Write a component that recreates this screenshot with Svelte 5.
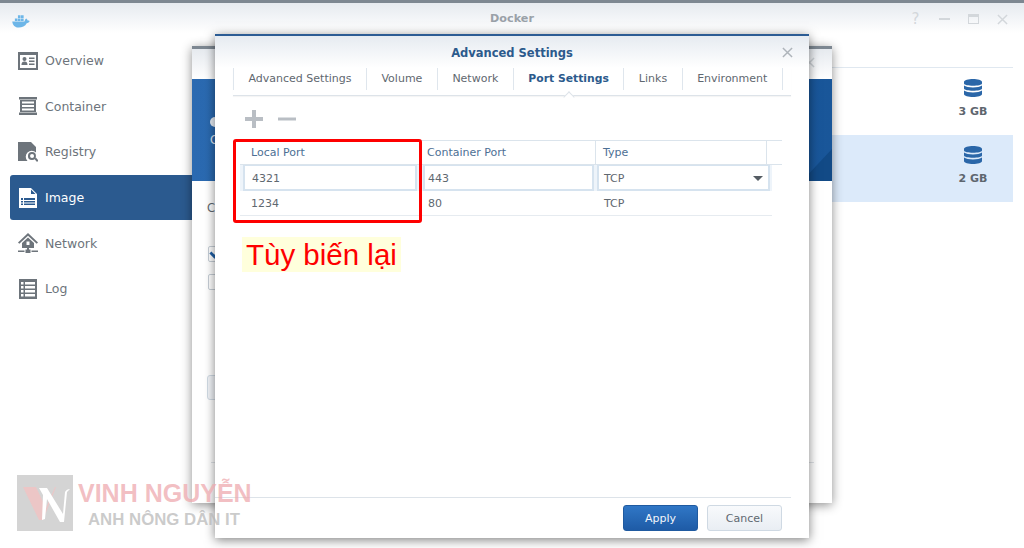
<script>
    const nav = [
        { label: 'Overview', icon: 'overview' },
        { label: 'Container', icon: 'container' },
        { label: 'Registry', icon: 'registry' },
        { label: 'Image', icon: 'image', active: true },
        { label: 'Network', icon: 'network' },
        { label: 'Log', icon: 'log' }
    ];
    const tabs = ['Advanced Settings', 'Volume', 'Network', 'Port Settings', 'Links', 'Environment'];
    const sizes = ['3 GB', '2 GB'];
</script>

{#snippet navIcon(name)}
    <svg class="nav-icon" viewBox="0 0 20 20" fill="currentColor">
        {#if name === 'overview'}
            <path fill-rule="evenodd" d="M0 1h20v18H0zM2 4v13h16V4z" />
            <circle cx="6.5" cy="8" r="2" />
            <path d="M3.5 14c0-3 1.500-3.500 3-3.500s3 .5 3 3.500zM11 6.500h5.500v1.500H11zM11 9.500h5.500V11H11zM11 12.500h5.500V14H11z" />
        {:else if name === 'container'}
            <path fill-rule="evenodd" d="M1 1h18v2.500H1zM1 16.500h18V19H1zM2 4h16v12H2zM4 5.500v2h12v-2zM4 9v2h12V9zM4 12.500v2h12v-2z" />
        {:else if name === 'registry'}
            <path d="M0 0h13l5 5v5.500a6 6 0 0 0-8.500 8.500H0z" />
            <path fill-rule="evenodd" d="M14 10a4 4 0 1 1-.1 8 4 4 0 0 1 .1-8zm0 2a2 2 0 1 0 .1 4 2 2 0 0 0-.1-4z" />
            <path d="M16.500 17l1.400-1.400 2.500 2.900-1.400 1.400z" />
        {:else if name === 'image'}
            <path fill-rule="evenodd" d="M1 0h12l6 6v14H1zM13 1.500V6h4.500zM3 10v2h2v-2zM6 10v2h11v-2zM3 13v1.500h2V13zM6 13v1.500h11V13zM3 15.500V17h2v-1.500zM6 15.500V17h11v-1.500z" />
        {:else if name === 'network'}
            <path fill-rule="evenodd" d="M10 0l10 9.500-1.300 1.300L10 2.800 1.300 10.800 0 9.500zM10 4.500l6 5.500v5H4v-5zM8.500 8.500v3.500h3V8.500z" />
            <path d="M9 15h2v2.500h-2zM0 17.500h6.500V19H0zM13.500 17.500H20V19h-6.500zM7.500 16.500h5V20h-5z" />
        {:else}
            <path fill-rule="evenodd" d="M1 0h18v20H1zM3 3v2.500h2.500V3zM7 3v2.500h10V3zM3 7v2.500h2.500V7zM7 7v2.500h10V7zM3 11v2.500h2.500V11zM7 11v2.500h10V11zM3 15v2.500h2.500V15zM7 15v2.500h10V15z" />
        {/if}
    </svg>
{/snippet}

{#snippet closeIcon(cls)}
    <svg class={cls} viewBox="0 0 12 12" fill="none" stroke="currentColor" stroke-width="1.600">
        <path d="M1 1l10 10M11 1L1 11" />
    </svg>
{/snippet}

<div class="desktop">
    <!-- ventana principal de Docker -->
    <section class="window main">
        <header class="main-title">
            <svg class="whale" viewBox="0 0 20 16">
                <path fill="#6db6e8" d="M0 8.500h14c.500-2 1-3 2-3.500 1 .5 1.500 1.500 1.500 2.500.8 0 1.800 0 2.500.5-1 2-2.500 2.500-3.500 2.500C15 14 11 15.500 7.500 15.500 3 15.500.5 12.500 0 8.500z" />
                <path fill="#6db6e8" d="M3 5h3v3H3zM6.500 5h3v3h-3zM10 5h3v3h-3zM6.500 1.500h3v3h-3zM10 1.500h3v3h-3z" />
            </svg>
            <span>Docker</span>
            <div class="win-controls">
                <span class="help">?</span>
                <i class="dash"></i>
                <i class="square"></i>
                {@render closeIcon('win-close')}
            </div>
        </header>
        <div class="main-body">
            <nav class="sidebar">
                {#each nav as item}
                    <div class="nav-item" class:active={item.active}>
                        {@render navIcon(item.icon)}
                        <span>{item.label}</span>
                    </div>
                {/each}
            </nav>
            <div class="image-list">
                {#each sizes as size, i}
                    <div class="image-row" class:selected={i === 1}>
                        <div class="size">
                            <svg class="disk" viewBox="0 0 18 18" fill="#2a66a8">
                                <path d="M0 3c0-4 18-4 18 0v1.500c0 3-18 3-18 0zM0 6.500c3 2.500 15 2.500 18 0V9.500c0 3-18 3-18 0zM0 11.500c3 2.500 15 2.500 18 0V15c0 4-18 4-18 0z" />
                            </svg>
                            <span>{size}</span>
                        </div>
                    </div>
                {/each}
            </div>
        </div>
    </section>

    <!-- asistente de atrás -->
    <section class="window wizard">
        <header class="wizard-title">
            {@render closeIcon('wizard-close')}
        </header>
        <div class="banner">
            <i class="banner-dot"></i>
            <span class="banner-text">C</span>
            <svg class="banner-mark" viewBox="0 0 30 102" preserveAspectRatio="none">
                <path fill="#124a86" d="M0 102l30-32v32z" />
            </svg>
        </div>
        <div class="wizard-body">
            <span class="wizard-label">C</span>
            <div class="checks">
                <span class="check on">
                    <svg viewBox="0 0 10 10" fill="none" stroke="#1f5fa5" stroke-width="2"><path d="M1 4l3 3 5-5" /></svg>
                </span>
                <span class="check"></span>
            </div>
            <span class="wizard-btn"></span>
            <i class="wizard-rule"></i>
        </div>
    </section>

    <!-- diálogo Advanced Settings -->
    <section class="window dialog">
        <header class="dialog-title">
            <span>Advanced Settings</span>
            {@render closeIcon('dialog-close')}
        </header>
        <div class="tabs">
            {#each tabs as tab}
                <div class="tab" class:current={tab === 'Port Settings'}>{tab}</div>
            {/each}
        </div>
        <div class="toolbar">
            <svg viewBox="0 0 20 20" fill="#b9bec4"><path d="M8 1h4v7h7v4h-7v7H8v-7H1V8h7z" /></svg>
            <svg viewBox="0 0 20 20" fill="#b9bec4"><path d="M1 8.500h18v3H1z" /></svg>
        </div>
        <div class="port-table">
            <div class="head">
                <div>Local Port</div>
                <div>Container Port</div>
                <div>Type</div>
                <div></div>
            </div>
            <div class="row editing">
                <div class="field">4321</div>
                <div class="field">443</div>
                <div class="field select">TCP<i class="caret"></i></div>
            </div>
            <div class="row plain">
                <div>1234</div>
                <div>80</div>
                <div>TCP</div>
            </div>
            <div class="red-box"></div>
        </div>
        <div class="note"><span>Tùy biến lại</span></div>
        <footer class="dialog-foot">
            <button class="btn primary">Apply</button>
            <button class="btn">Cancel</button>
        </footer>
    </section>

    <!-- marca de agua -->
    <div class="watermark">
        <svg class="wm-logo" viewBox="0 0 56 56">
            <rect width="56" height="56" fill="#d4d4d4" />
            <path fill="#ecc6c6" d="M6 12h13l10 21 9-21h1L26 45h-4z" />
            <path fill="#fff" d="M22 13h8l16 26 2-22c1-2 3-3 5-3l-3 3-3 30h-4L30 24l-2 20-3 1 1-25z" />
        </svg>
        <div class="wm-text">
            <strong>VINH NGUYỄN</strong>
            <span>ANH NÔNG DÂN IT</span>
        </div>
    </div>
</div>

<style>
    :global(body) {
        margin: 0;
    }

    .desktop {
        position: relative;
        width: 1024px;
        height: 548px;
        overflow: hidden;
        background: #fff;
        font-family: "DejaVu Sans", Verdana, sans-serif;
        font-size: 11.5px;
        color: #5f6870;
    }

    .window {
        position: absolute;
        display: flex;
        flex-direction: column;
        box-sizing: border-box;
        background: #fff;
    }

    /* Ventana principal */
    .main {
        inset: 0;
        border-top: 3px solid #7d8791;
    }

    .main-title {
        display: flex;
        align-items: center;
        justify-content: center;
        position: relative;
        height: 30px;
        flex: none;
        background: linear-gradient(#e6eaef, #fff);
        color: #9aa1a8;
        font-weight: bold;
        font-size: 11.200px;
    }

    .whale {
        position: absolute;
        left: 12px;
        top: 11px;
        width: 18px;
        height: 14px;
    }

    .win-controls {
        position: absolute;
        top: 8px;
        right: 16px;
        display: flex;
        align-items: center;
        gap: 18px;
        height: 16px;
        color: #d3d7db;
    }

    .help {
        width: 11px;
        text-align: center;
        font-size: 15px;
        font-weight: normal;
    }

    .dash {
        width: 11px;
        height: 2px;
        background: currentColor;
    }

    .square {
        box-sizing: border-box;
        width: 11px;
        height: 10px;
        border: 1px solid currentColor;
        border-top-width: 3px;
    }

    :global(.win-close) {
        width: 11px;
        height: 11px;
    }

    .main-body {
        display: flex;
        flex: 1;
    }

    .sidebar {
        box-sizing: border-box;
        width: 192px;
        flex: none;
        padding: 5px 0 0 10px;
        display: flex;
        flex-direction: column;
    }

    .nav-item {
        display: flex;
        align-items: center;
        gap: 7px;
        height: 45.600px;
        box-sizing: border-box;
        padding-left: 8px;
        font-size: 12.500px;
        color: #6d747b;
    }

    .nav-item.active {
        background: #2b5a8f;
        color: #fff;
        border-radius: 3px 0 0 3px;
    }

    .nav-icon {
        width: 20px;
        height: 20px;
        flex: none;
    }

    .image-list {
        flex: 1;
        margin: 34px 11px 0 0;
        border-top: 1px solid #e0e8f0;
    }

    .image-row {
        display: flex;
        justify-content: flex-end;
        height: 67px;
    }

    .image-row.selected {
        background: #dceafa;
    }

    .size {
        width: 80px;
        padding-top: 11px;
        display: flex;
        flex-direction: column;
        align-items: center;
        gap: 8px;
        font-weight: bold;
        font-size: 11px;
        color: #5e666e;
    }

    .disk {
        width: 18px;
        height: 18px;
    }

    /* Ventana del asistente */
    .wizard {
        left: 192px;
        top: 46px;
        width: 640px;
        height: 457px;
        border-top: 3px solid #7d8791;
        box-shadow: 0 2px 10px rgba(0, 0, 0, 0.45);
    }

    .wizard-title {
        position: relative;
        height: 30px;
        flex: none;
        background: linear-gradient(#e6eaef, #fff);
        color: #ccd1d6;
    }

    :global(.wizard-close) {
        position: absolute;
        right: 17px;
        top: 8px;
        width: 11px;
        height: 11px;
    }

    .banner {
        position: relative;
        height: 102px;
        flex: none;
        background: linear-gradient(90deg, #2b6ab1, #1a5ba1 70%, #195699);
        color: #dfe9f4;
    }

    .banner-dot {
        position: absolute;
        left: 18px;
        top: 38px;
        width: 10px;
        height: 10px;
        border-radius: 50%;
        background: #e6edf5;
    }

    .banner-text {
        position: absolute;
        left: 18px;
        top: 54px;
    }

    .banner-mark {
        position: absolute;
        right: 0;
        top: 0;
        width: 30px;
        height: 102px;
    }

    .wizard-body {
        position: relative;
        flex: 1;
    }

    .wizard-label {
        position: absolute;
        left: 15px;
        top: 20px;
    }

    .checks {
        position: absolute;
        left: 16px;
        top: 65px;
        display: flex;
        flex-direction: column;
        gap: 12px;
    }

    .check {
        box-sizing: border-box;
        display: block;
        width: 16px;
        height: 16px;
        border: 1px solid #c6ced6;
        border-radius: 2px;
    }

    .check svg {
        display: block;
        width: 14px;
        height: 14px;
    }

    .wizard-btn {
        position: absolute;
        left: 15px;
        top: 194px;
        width: 40px;
        height: 25px;
        box-sizing: border-box;
        border: 1px solid #d0dae4;
        border-radius: 3px;
        background: #f1f4f8;
    }

    .wizard-rule {
        position: absolute;
        left: 19px;
        right: 18px;
        top: 281px;
        height: 1px;
        background: #dfe3e7;
    }

    /* Diálogo */
    .dialog {
        left: 215px;
        top: 34px;
        width: 594px;
        height: 504px;
        border-top: 2px solid #2c5c94;
        box-shadow: 0 2px 10px rgba(0, 0, 0, 0.5);
    }

    .dialog-title {
        position: relative;
        display: flex;
        align-items: center;
        justify-content: center;
        height: 32px;
        padding-top: 1px;
        box-sizing: border-box;
        flex: none;
        background: linear-gradient(#e6ebf1, #fff);
        color: #2c5a8c;
        font-weight: bold;
        font-size: 11.500px;
    }

    :global(.dialog-close) {
        position: absolute;
        right: 16px;
        top: 11px;
        width: 11px;
        height: 11px;
        color: #aeb4ba;
    }

    .tabs {
        position: relative;
        display: flex;
        flex: none;
        margin: 0 18px;
        height: 27px;
        border-bottom: 1px solid #dde3e9;
        box-shadow: 0 1px 1px rgba(0, 0, 0, 0.04);
        align-items: flex-start;
    }

    .tab {
        position: relative;
        height: 22px;
        line-height: 22px;
        padding: 0 14.500px;
        border-right: 1px solid #dfe6ed;
        white-space: nowrap;
        font-size: 11px;
    }

    .tab:first-child {
        border-left: 1px solid #dfe6ed;
    }

    .tab.current {
        color: #2c5a8c;
        font-weight: bold;
        font-size: 10.800px;
    }

    .tab.current::after {
        content: "";
        position: absolute;
        left: 50%;
        bottom: -11px;
        width: 7px;
        height: 7px;
        margin-left: -4px;
        background: #fff;
        border: 1px solid #dde3e9;
        border-width: 1px 0 0 1px;
        transform: rotate(45deg);
    }

    .toolbar {
        display: flex;
        gap: 13px;
        flex: none;
        padding: 13px 0 0 29px;
        height: 31px;
    }

    .toolbar svg {
        width: 20px;
        height: 20px;
    }

    .port-table {
        position: relative;
        flex: none;
        margin-left: 25px;
        width: 542px;
        height: 80px;
        color: #5f6870;
    }

    .head {
        display: grid;
        grid-template-columns: 180px 176px 171px 15px;
        height: 25px;
        box-sizing: border-box;
        border-top: 1px solid #dbe4ec;
        border-bottom: 1px solid #dbe4ec;
        color: #4d6f94;
        font-size: 11px;
    }

    .head div {
        padding: 5px 0 0 7px;
        border-right: 1px solid #dbe4ec;
    }

    .head div:first-child {
        padding-left: 11px;
    }

    .head div:last-child {
        border-right: 0;
    }

    .row {
        display: grid;
        grid-template-columns: 177px 173px 176px;
        gap: 0 3px;
        width: 532px;
        font-size: 11px;
    }

    .editing {
        height: 26px;
        background: #eef4fa;
    }

    .field {
        box-sizing: border-box;
        position: relative;
        height: 26px;
        line-height: 25px;
        padding-left: 7px;
        background: #fff;
        border: 2px solid #d6e3ef;
        border-top-width: 1px;
        margin-left: 3px;
    }

    .row.editing .field:nth-child(2) {
        padding-left: 3px;
        width: 171px;
    }

    .row.editing .field:nth-child(3) {
        margin-left: 1px;
        padding-left: 5px;
        width: 173px;
    }

    .caret {
        position: absolute;
        right: 5px;
        top: 10px;
        border: 5px solid transparent;
        border-top: 5px solid #555c63;
        border-bottom: 0;
    }

    .plain {
        height: 25px;
        line-height: 26px;
        border-bottom: 1px solid #e6ebf0;
        box-sizing: border-box;
    }

    .plain div {
        padding-left: 11px;
    }

    .plain div:nth-child(2) {
        padding-left: 8px;
    }

    .plain div:nth-child(3) {
        padding-left: 8px;
    }

    .red-box {
        position: absolute;
        left: -7px;
        top: -1px;
        width: 189px;
        height: 84px;
        box-sizing: border-box;
        border: 3px solid #fe0000;
        border-radius: 3px;
    }

    .note {
        flex: 1;
        padding: 17px 0 0 27px;
    }

    .note span {
        display: inline-block;
        background: #ffffdc;
        color: #fe0000;
        font-family: "Liberation Sans", Arial, sans-serif;
        font-size: 29.500px;
        line-height: 35px;
        padding: 0 4px;
    }

    .dialog-foot {
        display: flex;
        justify-content: flex-end;
        gap: 9px;
        flex: none;
        height: 41px;
        margin-right: 18px;
        padding: 7px 9px 0 0;
        box-sizing: border-box;
        border-top: 1px solid #dde3e9;
    }

    .btn {
        width: 75px;
        height: 26px;
        padding: 0;
        border: 1px solid #cfd9e3;
        border-radius: 3px;
        background: linear-gradient(#f8fafc, #e9eef3);
        color: #5f6870;
        font-family: inherit;
        font-size: 11px;
    }

    .btn.primary {
        border-color: #1f5aa0;
        background: linear-gradient(#3077c6, #1e5ba6);
        color: #f2f6fb;
    }

    /* Marca de agua */
    .watermark {
        position: absolute;
        left: 17px;
        top: 475px;
        display: flex;
        gap: 5px;
        pointer-events: none;
    }

    .wm-logo {
        width: 56px;
        height: 56px;
    }

    .wm-text {
        display: flex;
        flex-direction: column;
        font-family: "Liberation Sans", Arial, sans-serif;
        font-weight: bold;
        white-space: nowrap;
    }

    .wm-text strong {
        font-size: 25px;
        line-height: 36px;
        color: rgba(238, 170, 175, 0.75);
    }

    .wm-text span {
        margin: 0 0 0 10px;
        font-size: 16.800px;
        line-height: 17px;
        color: rgba(180, 180, 180, 0.7);
    }
</style>
